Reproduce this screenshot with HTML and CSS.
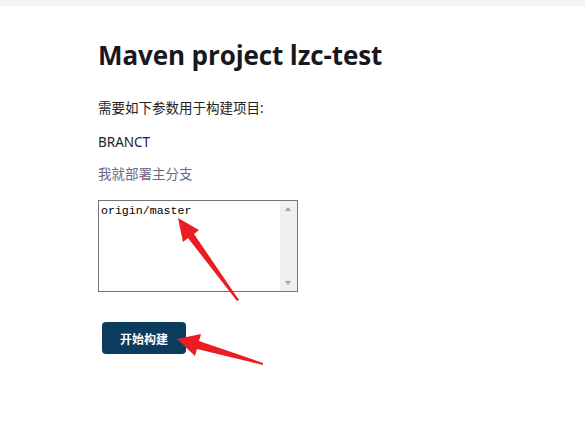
FILE: index.html
```html
<!DOCTYPE html>
<html>
<head>
<meta charset="utf-8">
<link rel="stylesheet" href="styles.css">
</head>
<body>
<div class="topbar"></div>
<main class="main">
  <h1 class="title">Maven project lzc-test</h1>
  <p class="intro">需要如下参数用于构建项目:</p>
  <div class="param-name">BRANCT</div>
  <div class="param-desc">我就部署主分支</div>
  <div class="textarea-box">
    <textarea class="textarea" spellcheck="false">origin/master</textarea>
    <div class="scrollbar">
      <span class="arrow-up"></span>
      <span class="arrow-down"></span>
    </div>
  </div>
  <button class="build-btn">开始构建</button>
</main>
<svg class="annot" width="585" height="441" viewBox="0 0 585 441">
  <polygon fill="#ec1c24" points="178,218 199,230 194,234 239,300 237,301 188,238 183,242"/>
  <polygon fill="#ec1c24" points="177,339 201,334 199,341 263,363 263,365 197,349 195,356"/>
</svg>
</body>
</html>
```
FILE: styles.css
```css
html, body {
  margin: 0;
  padding: 0;
  background: #ffffff;
  width: 585px;
  height: 441px;
  overflow: hidden;
}
body {
  font-family: "Noto Sans", "Noto Sans CJK SC", sans-serif;
  color: #1e1e23;
  position: relative;
}
.topbar {
  height: 6px;
  background: #f3f3f5;
}
.main {
  padding-left: 98px;
  display: flex;
  flex-direction: column;
  align-items: flex-start;
}
.title {
  margin: 31px 0 0 0;
  font-family: "Open Sans", "Noto Sans CJK SC", sans-serif;
  font-weight: 700;
  font-size: 26px;
  line-height: 36px;
  color: #181820;
  letter-spacing: -0.1px;
}
.intro {
  margin: 26px 0 0 0;
  font-size: 13.5px;
  line-height: 18px;
  color: #222228;
}
.param-name {
  margin-top: 16px;
  font-size: 13.5px;
  line-height: 18px;
  color: #222228;
}
.param-desc {
  margin-top: 14px;
  font-size: 13.5px;
  line-height: 18px;
  color: #6b6884;
}
.textarea-box {
  margin-top: 17px;
  width: 198px;
  height: 90px;
  border: 1px solid #767676;
  display: flex;
}
.textarea {
  flex: 1;
  border: none;
  outline: none;
  resize: none;
  padding: 2px 2px;
  margin: 0;
  font-family: "Liberation Mono", "DejaVu Sans Mono", monospace;
  font-size: 11.6px;
  line-height: 15px;
  color: #000;
  background: #fff;
  overflow: hidden;
}
.scrollbar {
  width: 17px;
  background: #f0f0f0;
  position: relative;
}
.arrow-up, .arrow-down {
  position: absolute;
  left: 5px;
  width: 0;
  height: 0;
  border-left: 3.5px solid transparent;
  border-right: 3.5px solid transparent;
}
.arrow-up {
  top: 6px;
  border-bottom: 4px solid #a3a3a3;
}
.arrow-down {
  bottom: 6px;
  border-top: 4px solid #a3a3a3;
}
.build-btn {
  margin: 30px 0 0 4px;
  width: 84px;
  height: 32px;
  border: none;
  border-radius: 4px;
  background: #0b3b5d;
  color: #ffffff;
  font-family: "Noto Sans CJK SC", sans-serif;
  font-weight: 700;
  font-size: 12px;
  padding: 0;
}
.annot {
  position: absolute;
  left: 0;
  top: 0;
  pointer-events: none;
}
```
